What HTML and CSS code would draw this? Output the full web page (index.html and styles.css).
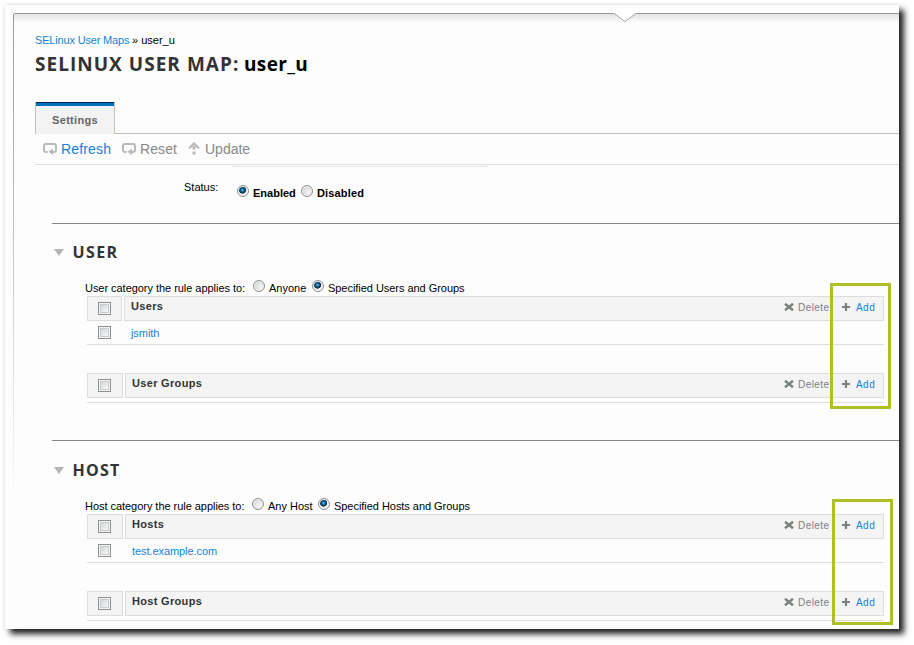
FILE: index.html
```html
<!DOCTYPE html>
<html lang="en">
<head>
<meta charset="utf-8">
<title>SELinux User Map</title>
<link rel="stylesheet" href="styles.css">
</head>
<body>
<svg class="defs" width="0" height="0">
  <symbol id="cycle" viewBox="0 0 14 12"><path d="M4.600 9H3a2 2 0 0 1-2-2V3a2 2 0 0 1 2-2h8a2 2 0 0 1 2 2v4a2 2 0 0 1-2 2H9.500" fill="none" stroke="#b9b9b9" stroke-width="2"/><path d="M10 5.500V12L5.500 8.800z" fill="#b9b9b9"/></symbol>
  <symbol id="up" viewBox="0 0 12 13"><path d="M1 6.300L6 1.500l5 4.800" fill="none" stroke="#b9b9b9" stroke-width="2.200"/><path d="M4.500 4h3v3.500h-3zM4.500 9.500h3v3h-3z" fill="#b9b9b9"/></symbol>
  <symbol id="cross" viewBox="0 0 10 8"><path d="M1 .8L9 7.200M9 .8L1 7.200" stroke="#7b8081" stroke-width="2.500"/></symbol>
  <symbol id="plus" viewBox="0 0 8 8"><path d="M4 0v8M0 4h8" stroke="#7b8081" stroke-width="2.200"/></symbol>
</svg>
<div class="window">
  <header class="strip"></header>
  <svg class="notch" width="24" height="10" viewBox="0 0 24 10"><path d="M1 0L12 8.500 23 0z" fill="#fff"/><path d="M1 .5L12 8.500 23 .5" fill="none" stroke="#aaa"/></svg>
  <main class="page">
    <nav class="crumbs"><a class="c1">SELinux User Maps</a><span>» user_u</span></nav>
    <h1 class="title"><span class="kind">SELINUX USER MAP:</span><span class="name">user_u</span></h1>
    <div class="tabs"><div class="tab">Settings</div></div>
    <div class="toolbar">
      <a class="tool refresh"><svg width="14" height="12"><use href="#cycle"/></svg>Refresh</a>
      <a class="tool reset off"><svg width="14" height="12"><use href="#cycle"/></svg>Reset</a>
      <a class="tool update off"><svg width="12" height="13"><use href="#up"/></svg>Update</a>
    </div>
    <div class="field-edge"></div>
    <div class="status">
      <span class="status-label">Status:</span>
      <span class="radio on"></span><b class="enabled">Enabled</b>
      <span class="radio"></span><b class="disabled">Disabled</b>
    </div>

    <section class="facet user">
      <h2><i class="arrow"></i><span>USER</span></h2>
      <div class="category">
        <span class="question">User category the rule applies to:</span>
        <span class="radio"></span><span class="first">Anyone</span>
        <span class="radio on"></span><span class="second">Specified Users and Groups</span>
      </div>
      <div class="table">
        <div class="head narrow"><div class="check"><i class="box"></i></div><div class="bar"><b class="users">Users</b><span class="del"><svg width="10" height="8"><use href="#cross"/></svg>Delete</span><a class="add"><svg width="8" height="8"><use href="#plus"/></svg>Add</a></div></div>
        <div class="row"><i class="box"></i><a class="jsmith">jsmith</a></div>
      </div>
      <div class="table groups">
        <div class="head"><div class="check"><i class="box"></i></div><div class="bar"><b class="ugroups">User Groups</b><span class="del"><svg width="10" height="8"><use href="#cross"/></svg>Delete</span><a class="add"><svg width="8" height="8"><use href="#plus"/></svg>Add</a></div></div>
        <div class="empty"></div>
      </div>
    </section>

    <section class="facet host">
      <h2><i class="arrow"></i><span>HOST</span></h2>
      <div class="category">
        <span class="question">Host category the rule applies to:</span>
        <span class="radio"></span><span class="first">Any Host</span>
        <span class="radio on"></span><span class="second">Specified Hosts and Groups</span>
      </div>
      <div class="table">
        <div class="head"><div class="check"><i class="box"></i></div><div class="bar"><b class="hosts">Hosts</b><span class="del"><svg width="10" height="8"><use href="#cross"/></svg>Delete</span><a class="add"><svg width="8" height="8"><use href="#plus"/></svg>Add</a></div></div>
        <div class="row"><i class="box"></i><a class="testhost">test.example.com</a></div>
      </div>
      <div class="table groups">
        <div class="head"><div class="check"><i class="box"></i></div><div class="bar"><b class="hgroups">Host Groups</b><span class="del"><svg width="10" height="8"><use href="#cross"/></svg>Delete</span><a class="add"><svg width="8" height="8"><use href="#plus"/></svg>Add</a></div></div>
        <div class="empty"></div>
      </div>
    </section>
  </main>
  <div class="highlight one"></div>
  <div class="highlight two"></div>
</div>
</body>
</html>
```
FILE: styles.css
```css
* { box-sizing: border-box; }
html, body { margin: 0; height: 645px; overflow: hidden; background: #fff; }
body { font: 11px/12px "Liberation Sans", Arial, sans-serif; color: #000; padding: 5px 0 0 5px; }
svg { display: block; flex: none; }
.defs { position: absolute; }
a { color: #1582d8; }
span, b, a { white-space: nowrap; }

.window { position: relative; width: 894px; height: 624px; background: #fdfdfd; box-shadow: 5px 5px 6px #222, 0 0 4px #ddd; }
.strip { height: 9px; margin-left: 9px; background: #fff; border-bottom: 1px solid #999; }
.notch { position: absolute; left: 608px; top: 8px; z-index: 1; }
.page { height: 615px; margin-left: 8px; padding-left: 22px; overflow: hidden;
  background: linear-gradient(#e2e2e2, #fdfdfd 9px) 1px 0 / 100% 10px no-repeat, linear-gradient(#999, #bbb 30%, #fdfdfd 80%) 0 0 / 1px 100% no-repeat; }

.crumbs { display: flex; padding-top: 20px; height: 36px; }
.c1 { width: 97px; letter-spacing: -.17px; }
.title { display: flex; margin: 0; height: 52px; font: bold 19px/29px "Open Sans", sans-serif; }
.kind { width: 209px; color: #333; letter-spacing: 1.030px; }
.name { letter-spacing: .35px; }
.tabs { height: 32px; border-bottom: 1px solid #c5c0b5; }
.tab { width: 80px; height: 32px; padding-top: 9px; text-align: center; font-weight: bold; color: #666; letter-spacing: .3px; line-height: 19px;
  background: #f3f3f3; border: solid #c5c0b5; border-width: 0 1px; box-shadow: inset 0 1px #00284d, inset 0 4px #0070bd; }
.toolbar { display: flex; height: 31px; border-bottom: 1px solid #ddd; padding-left: 8px; font-size: 14px; line-height: 31px; }
.tool { display: flex; }
.tool svg { margin-top: 9px; margin-right: 4px; }
.refresh { width: 79px; letter-spacing: .15px; }
.reset { width: 66px; letter-spacing: .1px; }
.off { color: #888; }
.update svg { margin-top: 8px; margin-right: 5px; }
.field-edge { height: 2px; width: 256px; margin-left: 197px; border: solid #e0e4ec; border-width: 0 1px 1px; border-radius: 0 0 2px 2px; }
.status { display: flex; height: 56px; padding: 14px 0 0 149px; }
.status-label { width: 53px; }
.status .radio { margin-top: 4px; }
.status b { margin: 6px 0 0 4px; }
.enabled { width: 48px; }
.disabled { letter-spacing: .15px; }
.radio { flex: none; width: 12px; height: 12px; border: 1px solid #8e8f8f; border-radius: 50%; box-shadow: inset 0 0 0 1px #f6f6f6;
  background: radial-gradient(circle at 65% 65%, #f5f5f5, #c6cbd0); }
.radio.on { background: radial-gradient(circle at 45% 40%, #6ccbf4 0, #17699a 1.500px, #0b3048 3.200px, #eee 4px); }

.facet { height: 217px; margin-left: 17px; border-top: 1px solid #888; }
h2 { display: flex; margin: 0; height: 57px; padding: 18px 0 0 2px; font: bold 16px/22px "Open Sans", sans-serif; letter-spacing: 1.200px; color: #333; }
.user h2 span { margin-top: -1px; letter-spacing: 1.400px; }
.user .arrow { margin-top: 7px; }
.arrow { width: 10px; height: 7px; margin: 8px 8.500px 0 0; background: #b4b4b4; clip-path: polygon(0 0, 100% 0, 50% 100%); }
.category { display: flex; padding-left: 33px; height: 15px; }
.category > span:not(.radio) { margin-top: 1px; }
.category .radio { margin-top: -1px; }
.question { width: 168px; letter-spacing: -.04px; }
.first, .second { padding-left: 4px; }
.second { letter-spacing: -.04px; }
.first { width: 47px; }
.host h2 { height: 58px; }
.host .question { width: 167px; }
.host .first { width: 54px; }
.table { width: 797px; margin-left: 35px; height: 49px; border-bottom: 1px solid #ddd; }
.groups { margin-top: 28px; height: 30px; }
.head { display: grid; grid-template-columns: 36px 759px; gap: 2px; height: 25px; }
.head.narrow { grid-template-columns: 35px 760px; }
.check, .bar { background: #f4f4f4; border: 1px solid #ddd; }
.check { padding: 5px 0 0 10px; }
.box { display: block; width: 13px; height: 13px; border: 1px solid #8e8f8f; box-shadow: inset 0 0 0 1px #f4f4f4, inset 0 0 0 2px #c9cccf; background: linear-gradient(135deg, #c8cdd3, #f7f7f7 80%); }
.bar { display: flex; padding-left: 6px; }
.bar b { flex: 1; color: #333; letter-spacing: .32px; padding-top: 3px; }
.del, .add { display: flex; font-size: 10px; line-height: 21px; letter-spacing: .45px; }
.del { width: 58px; color: #7b8081; }
.add { width: 42px; }
.del svg { margin: 6px 4px 0 1px; }
.add svg { margin: 6px 6px 0 1px; }
.row { display: flex; padding: 5px 0 0 11px; }
.row a { margin: 1px 0 0 20px; letter-spacing: -.07px; }
.host .row a { margin-left: 21px; }
.highlight { position: absolute; width: 61px; height: 126px; border: 3px solid #afbf27; }
.one { left: 825px; top: 278px; }
.two { left: 827px; top: 494px; }
```
